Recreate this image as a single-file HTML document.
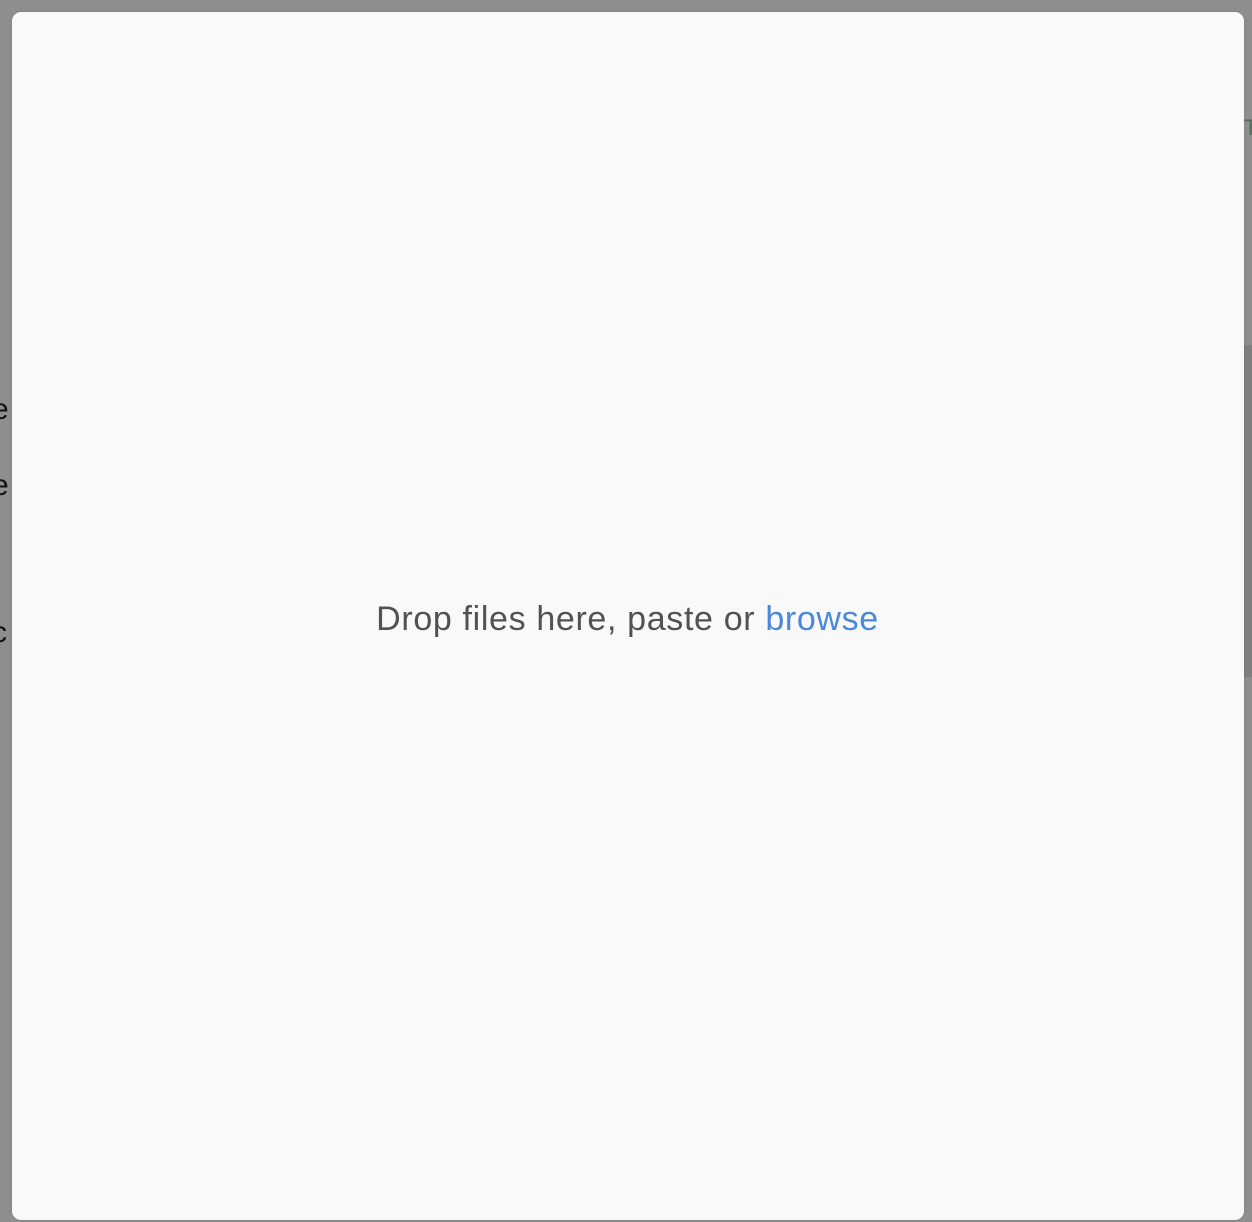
<!DOCTYPE html>
<html><head><style>
html,body{margin:0;padding:0;width:1252px;height:1222px;overflow:hidden;background:#8e8e8e;font-family:"Liberation Sans",sans-serif;position:relative}
.band{position:absolute;left:1244px;width:8px;top:345px;height:332px;background:#7f7f7f}
.t{position:absolute;left:1244px;top:118px;width:8px;height:20px;color:#4c6e5c;font-size:22px;line-height:20px;overflow:hidden}
.l{position:absolute;left:-8px;color:#111;font-size:30px}
.modal{position:absolute;left:12px;top:12px;width:1232px;height:1208px;background:#f9f9f9;border-radius:9px;box-shadow:0 0 2px rgba(0,0,0,.15)}
.msg{position:absolute;left:3px;right:0;top:600px;text-align:center;font-size:34px;color:#525252;letter-spacing:0.65px}
.msg span{color:#4a88d9}
</style></head><body>
<div class="band"></div>
<div class="t">T</div>
<div class="l" style="top:393px">e</div>
<div class="l" style="top:469px">e</div>
<div class="l" style="top:616px">c</div>
<div class="modal"></div>
<div class="msg">Drop files here, paste or <span>browse</span></div>
</body></html>
